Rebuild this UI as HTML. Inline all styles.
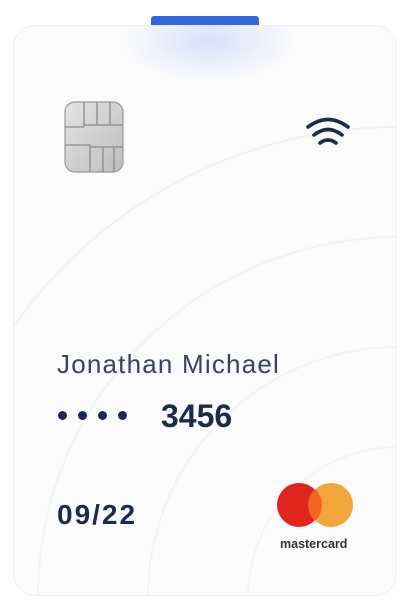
<!DOCTYPE html>
<html><head><style>
html,body{margin:0;padding:0;background:#fff;width:410px;height:608px;overflow:hidden;font-family:"Liberation Sans",sans-serif}
.bar{position:absolute;left:151px;top:16px;width:108px;height:10px;background:#2f67e0;border-radius:3px 3px 0 0}
.card{position:absolute;left:13px;top:25px;width:384px;height:571px;border-radius:22px;background:#fbfbfc;border:1px solid #eef0f4;overflow:hidden;box-sizing:border-box}
.glow{position:absolute;left:100px;top:-30px;width:190px;height:90px;background:radial-gradient(ellipse at center,rgba(120,160,240,.28),rgba(120,160,240,0) 65%)}
.t{position:absolute;color:#1e2a4a;white-space:nowrap}
.d{position:absolute;top:411px;width:9px;height:9px;border-radius:50%;background:#1e2a4a}
</style></head><body>
<div class="bar"></div>
<div class="card">
<div class="glow"></div>
<svg width="384" height="571" style="position:absolute;left:0;top:0">
<circle cx="384" cy="571" r="470" fill="none" stroke="#f1f2f5" stroke-width="2"/>
<circle cx="384" cy="571" r="360" fill="none" stroke="#f2f3f6" stroke-width="2"/>
<circle cx="384" cy="571" r="250" fill="none" stroke="#f2f3f6" stroke-width="2"/>
<circle cx="384" cy="571" r="150" fill="none" stroke="#f3f4f6" stroke-width="2"/>
</svg>
</div>
<svg style="position:absolute;left:64px;top:101px" width="60" height="72" viewBox="0 0 60 72">
<defs><linearGradient id="g" x1="0" y1="0" x2="1" y2="1"><stop offset="0" stop-color="#e4e4e4"/><stop offset="1" stop-color="#bdbdbd"/></linearGradient></defs>
<rect x="1" y="1" width="58" height="70" rx="10" fill="url(#g)" stroke="#999" stroke-width="1.2"/>
<g fill="none" stroke="#8a8a8a" stroke-width="1.3">
<path d="M1 26H20M20 26L20 1M33 1V24M46 1V24M20 24H59"/>
<path d="M1 44H26V71M26 46H59M39 46V71M50 46V71"/>
</g></svg>
<svg style="position:absolute;left:305px;top:114px" width="46" height="38" viewBox="0 0 46 38">
<g fill="none" stroke="#1e2a4a" stroke-width="3.6" stroke-linecap="round">
<path d="M3 13Q23 -2 43 13"/><path d="M9 21Q23 10 37 21"/><path d="M15 29Q23 23 31 29"/>
</g></svg>
<div class="t" style="left:57px;top:349px;font-size:26px;letter-spacing:1.2px;color:#3a4260">Jonathan Michael</div>
<div class="d" style="left:58px"></div><div class="d" style="left:78px"></div><div class="d" style="left:98px"></div><div class="d" style="left:118px"></div>
<div class="t" style="left:161px;top:398px;font-size:32px;font-weight:bold">3456</div>
<div class="t" style="left:57px;top:499px;font-size:28px;font-weight:bold;letter-spacing:2px">09/22</div>
<svg style="position:absolute;left:276px;top:482px" width="80" height="48">
<circle cx="23" cy="23" r="22" fill="#e0251f"/>
<circle cx="55" cy="23" r="22" fill="#f0a030" fill-opacity=".95"/>
<path d="M39 7A22 22 0 0 1 39 39A22 22 0 0 1 39 7Z" fill="#f06522"/>
</svg>
<div class="t" style="left:280px;top:537px;font-size:12.5px;font-weight:bold;color:#333">mastercard</div>
</body></html>
